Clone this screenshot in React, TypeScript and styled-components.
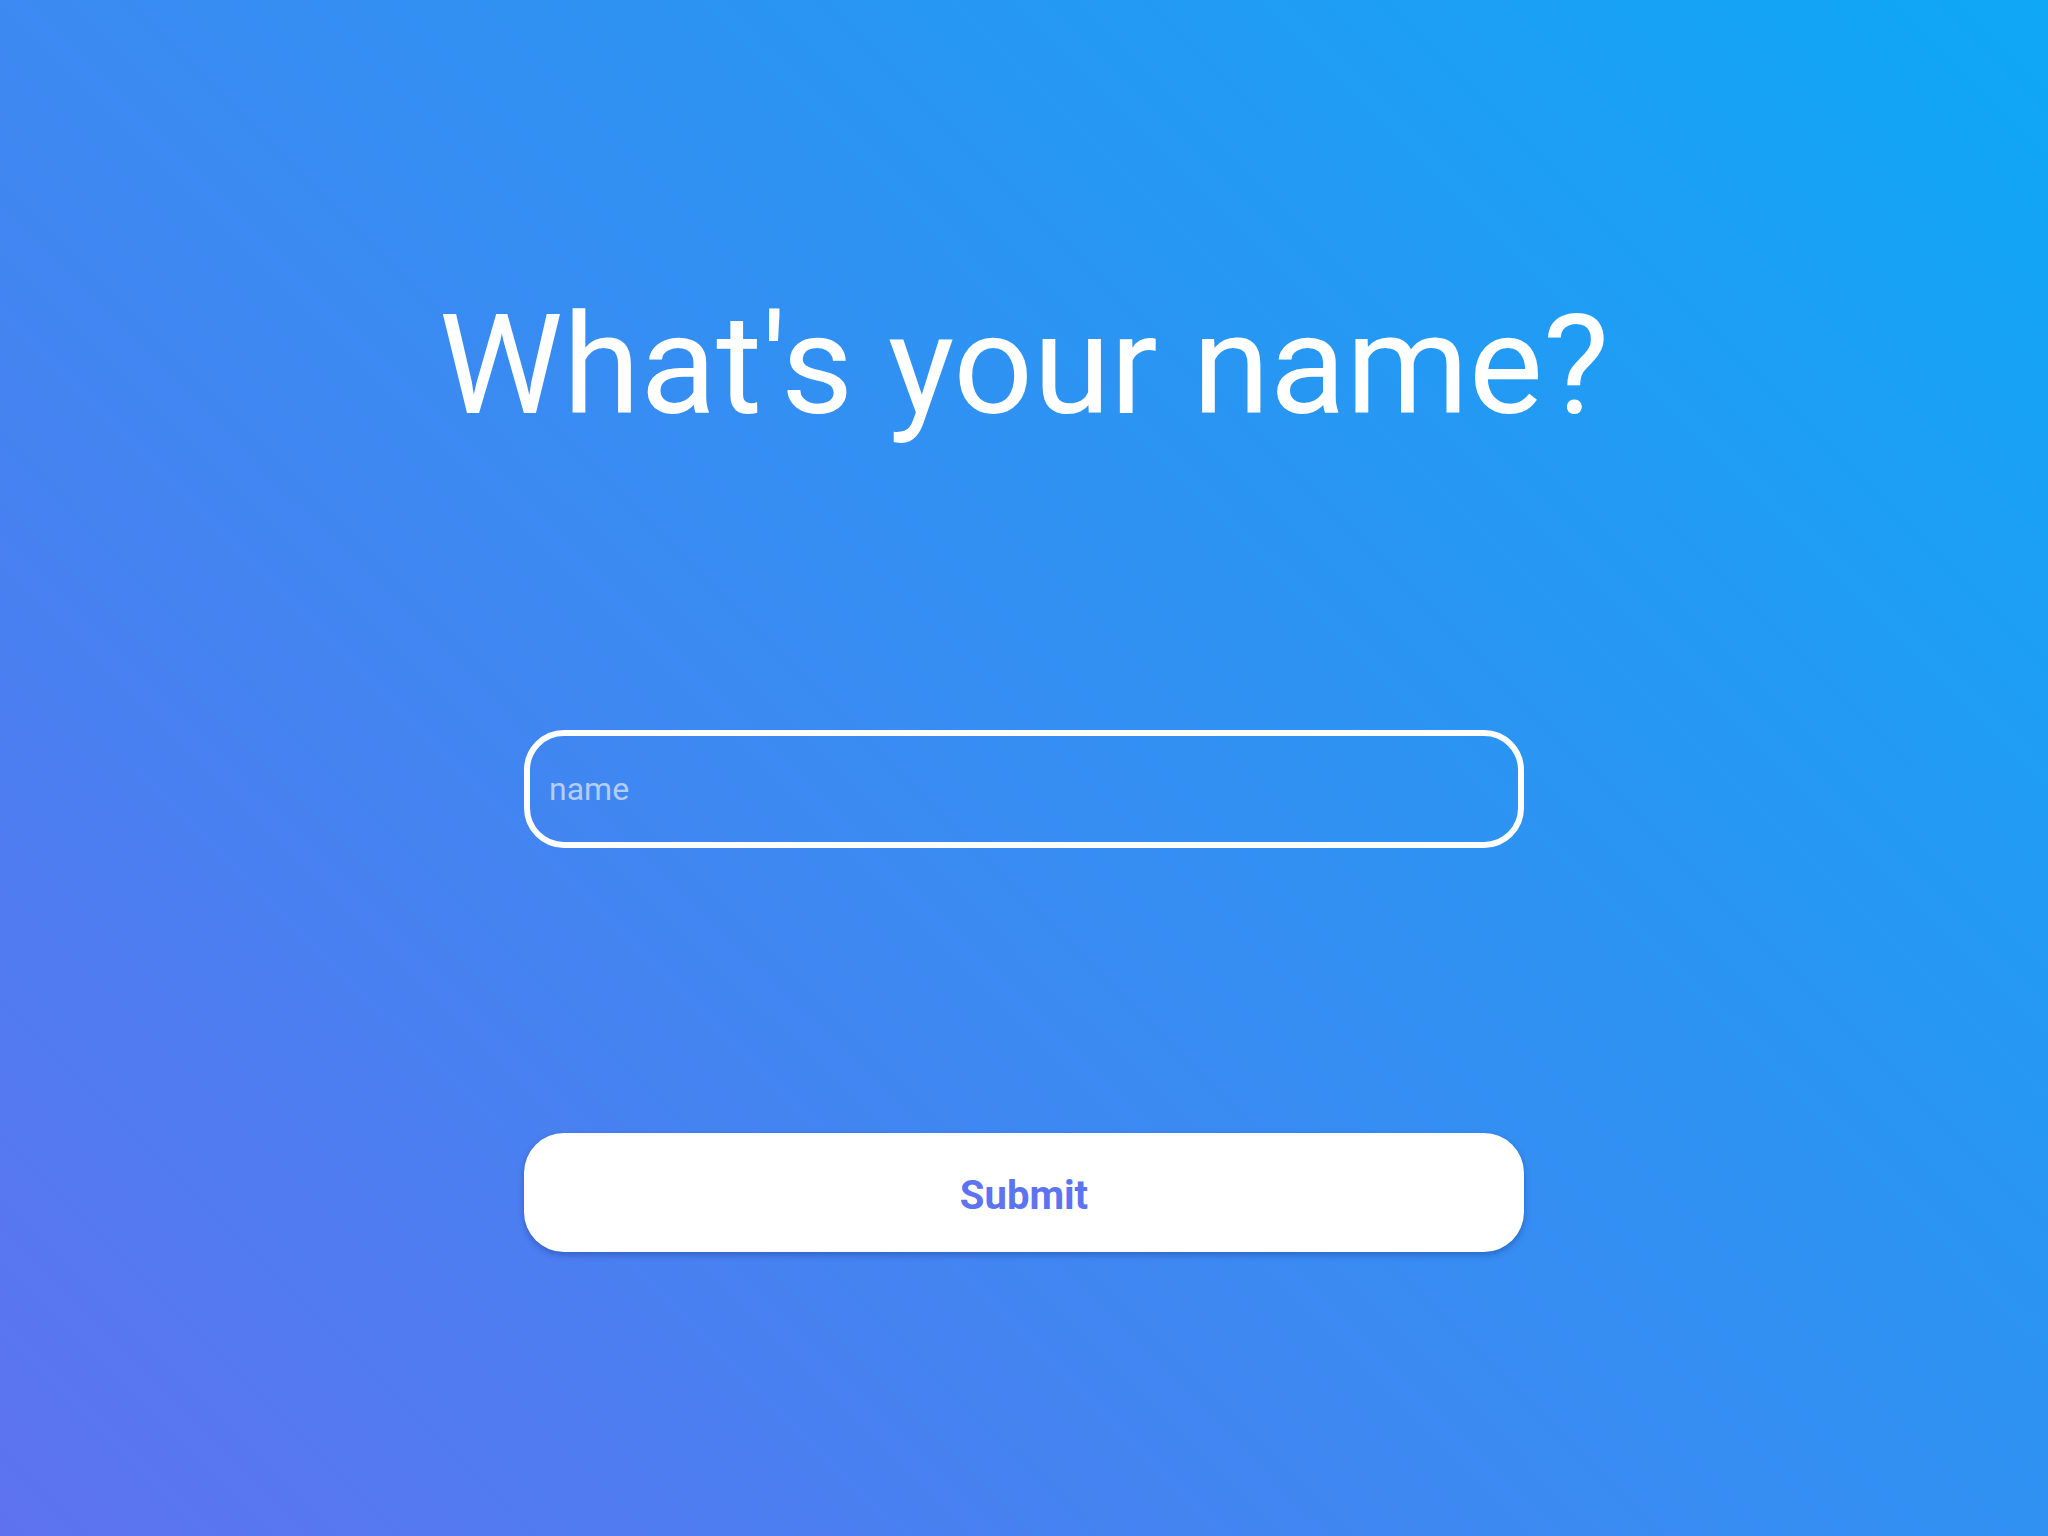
import React from "react";
import styled, { createGlobalStyle } from "styled-components";

const GlobalStyle = createGlobalStyle`
  html, body {
    margin: 0;
    padding: 0;
  }
  body {
    font-family: Roboto, "Liberation Sans", sans-serif;
  }
`;

const Page = styled.main`
  width: 2048px;
  height: 1536px;
  box-sizing: border-box;
  background: linear-gradient(45deg, #5e72ef 0%, #0ea8f6 100%);
  display: flex;
  flex-direction: column;
  align-items: center;
  padding-top: 283px;
`;

const Heading = styled.h1`
  margin: 0;
  font-family: Roboto, sans-serif;
  font-weight: 400;
  font-size: 140px;
  line-height: normal;
  color: #ffffff;
  text-align: center;
`;

const Form = styled.form`
  width: 1000px;
  display: flex;
  flex-direction: column;
  margin-top: 283px;
  gap: 285px;
`;

const NameInput = styled.input`
  box-sizing: border-box;
  width: 100%;
  height: 118px;
  border: 6px solid #ffffff;
  border-radius: 40px;
  background: transparent;
  padding: 0 19px;
  font-family: Roboto, sans-serif;
  font-size: 32px;
  color: #ffffff;
  outline: none;
  &::placeholder {
    color: rgba(255, 255, 255, 0.6);
  }
`;

const SubmitButton = styled.button`
  box-sizing: border-box;
  width: 100%;
  height: 119px;
  border: none;
  border-radius: 40px;
  background: #ffffff;
  color: #5c74ef;
  font-family: Roboto, sans-serif;
  font-weight: 700;
  font-size: 40px;
  padding: 5px 0 0;
  cursor: pointer;
  box-shadow: 0 3px 6px rgba(20, 40, 120, 0.35);
`;

export default function App() {
  return (
    <>
      <GlobalStyle />
      <Page>
        <Heading>What's your name?</Heading>
        <Form onSubmit={(e) => e.preventDefault()}>
          <NameInput type="text" placeholder="name" />
          <SubmitButton type="submit">Submit</SubmitButton>
        </Form>
      </Page>
    </>
  );
}
